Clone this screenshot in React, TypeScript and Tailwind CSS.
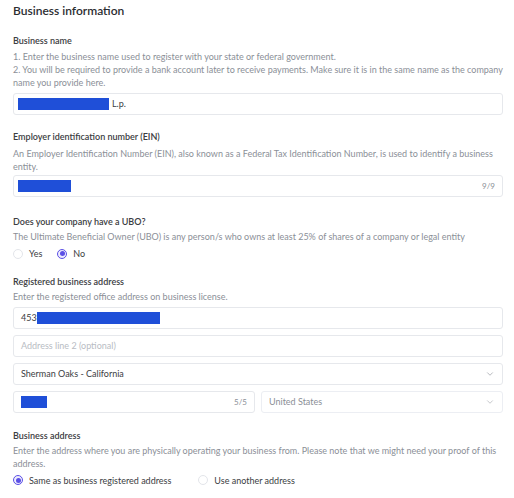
import { ChevronDown } from "lucide-react";

function Label({ children }: { children: React.ReactNode }) {
  return <div className="text-[9px] font-semibold leading-[13px] text-[#3b3d42]">{children}</div>;
}

function Desc({ children }: { children: React.ReactNode }) {
  return <div className="text-[9px] leading-[13px] text-[#8b8f97]">{children}</div>;
}

function Redact({ w }: { w: string }) {
  return <span className={`inline-block h-[12px] bg-[#1f4fd8] ${w}`} />;
}

function Radio({ checked, label }: { checked?: boolean; label: string }) {
  return (
    <label className="flex items-center gap-[6px] text-[9px] text-[#3b3d42]">
      <span
        className={
          checked
            ? "flex h-[10px] w-[10px] items-center justify-center rounded-full border border-[#5b50e6] bg-[#eeecfd]"
            : "h-[10px] w-[10px] rounded-full border border-[#e3e5ea]"
        }
      >
        {checked && <span className="h-[5px] w-[5px] rounded-full bg-[#5b50e6]" />}
      </span>
      {label}
    </label>
  );
}

function Field({ children, className = "" }: { children?: React.ReactNode; className?: string }) {
  return (
    <div
      className={`flex h-[22px] items-center rounded-[3px] border border-[#e6e8ec] bg-white px-[7px] text-[9px] text-[#3b3d42] ${className}`}
    >
      {children}
    </div>
  );
}

export default function App() {
  return (
    <div className="min-h-screen bg-white pl-[13px] pr-[11px] pt-[3px] font-['Lato',sans-serif]">
      <h1 className="text-[12px] font-semibold leading-[16px] text-[#2b2d31]">Business information</h1>

      {/* Business name */}
      <div className="mt-[15px]">
        <Label>Business name</Label>
        <div className="mt-[3px]">
          <Desc>1. Enter the business name used to register with your state or federal government.</Desc>
          <Desc>
            2. You will be required to provide a bank account later to receive payments. Make sure it is in the same name as the company
            name you provide here.
          </Desc>
        </div>
        <Field className="mt-[4px] pl-[4px]">
          <Redact w="w-[91px]" />
          <span className="ml-[3px]">L.p.</span>
        </Field>
      </div>

      {/* EIN */}
      <div className="mt-[15px]">
        <Label>Employer identification number (EIN)</Label>
        <div className="mt-[4px]">
          <Desc>
            An Employer Identification Number (EIN), also known as a Federal Tax Identification Number, is used to identify a business
            entity.
          </Desc>
        </div>
        <Field className="mt-[2px] justify-between pl-[4px]">
          <Redact w="w-[53px]" />
          <span className="text-[8px] text-[#8b8f97]">9/9</span>
        </Field>
      </div>

      {/* UBO */}
      <div className="mt-[18px]">
        <Label>Does your company have a UBO?</Label>
        <div className="mt-[2px]">
          <Desc>The Ultimate Beneficial Owner (UBO) is any person/s who owns at least 25% of shares of a company or legal entity</Desc>
        </div>
        <div className="mt-[4px] flex gap-[15px]">
          <Radio label="Yes" />
          <Radio checked label="No" />
        </div>
      </div>

      {/* Registered business address */}
      <div className="mt-[14px]">
        <Label>Registered business address</Label>
        <div className="mt-[2px]">
          <Desc>Enter the registered office address on business license.</Desc>
        </div>
        <div className="mt-[4px] flex flex-col gap-[6px]">
          <Field>
            <span>453</span>
            <Redact w="w-[123px]" />
          </Field>
          <Field>
            <span className="text-[#b8bcc3]">Address line 2 (optional)</span>
          </Field>
          <Field className="justify-between">
            <span>Sherman Oaks - California</span>
            <ChevronDown className="h-[10px] w-[10px] text-[#8b8f97]" strokeWidth={1.5} />
          </Field>
          <div className="flex gap-[6px]">
            <Field className="flex-1 justify-between">
              <Redact w="w-[26px]" />
              <span className="text-[8px] text-[#8b8f97]">5/5</span>
            </Field>
            <Field className="flex-1 justify-between border-[#eceef3] bg-[#f1f3f8]">
              <span className="text-[#8b8f97]">United States</span>
              <ChevronDown className="h-[10px] w-[10px] text-[#a3a7ae]" strokeWidth={1.5} />
            </Field>
          </div>
        </div>
      </div>

      {/* Business address */}
      <div className="mt-[16px]">
        <Label>Business address</Label>
        <div className="mt-[2px]">
          <Desc>
            Enter the address where you are physically operating your business from. Please note that we might need your proof of this
            address.
          </Desc>
        </div>
        <div className="mt-[4px] flex gap-[27px]">
          <Radio checked label="Same as business registered address" />
          <Radio label="Use another address" />
        </div>
      </div>
    </div>
  );
}
